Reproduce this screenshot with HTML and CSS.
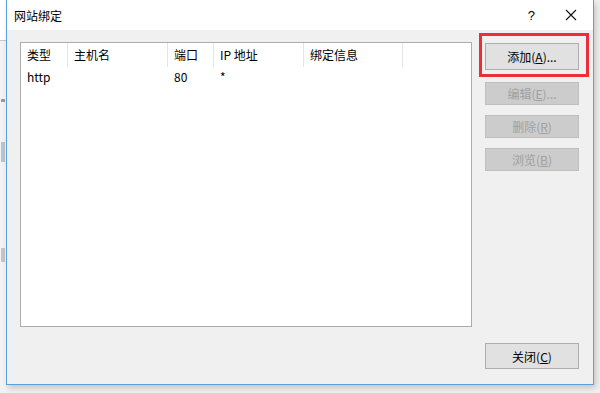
FILE: index.html
```html
<!DOCTYPE html>
<html lang="zh-CN">
<head>
    <meta charset="UTF-8">
    <title>网站绑定</title>
    <link rel="stylesheet" href="styles.css">
</head>
<body>

    <div class="desktop">
        <div class="behind">
            <div class="behind-top"></div>
            <div class="behind-mark m1"></div>
            <div class="behind-mark m2"></div>
            <div class="behind-mark m3"></div>
        </div>

        <div class="dialog">
            <div class="titlebar">
                <span class="title">网站绑定</span>
                <span class="help">?</span>
                <span class="close-x">
                    <svg width="12" height="12" viewBox="0 0 12 12">
                        <path d="M1 1 L11 11 M11 1 L1 11" stroke="#111" stroke-width="1.1" fill="none"/>
                    </svg>
                </span>
            </div>

            <div class="body">
                <div class="list">
                    <div class="row head">
                        <div class="col c1">类型</div>
                        <div class="col c2">主机名</div>
                        <div class="col c3">端口</div>
                        <div class="col c4">IP 地址</div>
                        <div class="col c5">绑定信息</div>
                    </div>
                    <div class="row item">
                        <div class="col c1">http</div>
                        <div class="col c2"></div>
                        <div class="col c3">80</div>
                        <div class="col c4">*</div>
                        <div class="col c5"></div>
                    </div>
                </div>

                <div class="actions">
                    <button class="btn main">添加(<u>A</u>)...</button>
                    <button class="btn off">编辑(<u>E</u>)...</button>
                    <button class="btn off">删除(<u>R</u>)</button>
                    <button class="btn off">浏览(<u>B</u>)</button>
                    <button class="btn bottom">关闭(<u>C</u>)</button>
                </div>
            </div>

            <!-- annotation box round the add button -->
            <div class="highlight"></div>
        </div>
    </div>

</body>
</html>
```

FILE: styles.css
```css
body {
    margin: 0;
    background: #f0f0f0;
    font-family: "Noto Sans CJK SC", "Liberation Sans", sans-serif;
    font-size: 12px;
    color: #000;
}
.desktop {
    display: flex;
    width: 600px;
    height: 393px;
    overflow: hidden;
}
.behind {
    width: 6px;
    flex-shrink: 0;
    display: flex;
    flex-direction: column;
    background: #f3f3f3;
}
.behind-top {
    height: 40px;
    background: #fff;
    border-bottom: 1px solid #c8c8c8;
}
.behind-mark {
    width: 4px;
    margin-left: 1px;
    background: #9a9a9a;
}
.m1 {
    height: 3px;
    margin-top: 58px;
}
.m2 {
    height: 20px;
    margin-top: 40px;
    background: #b8c4d0;
}
.m3 {
    height: 14px;
    margin-top: 86px;
    background: #c6c6c6;
}
.dialog {
    position: relative;
    width: 586px;
    height: 384px;
    border: 1px solid #5a9fe0;
    border-top: none;
    background: #f0f0f0;
    display: flex;
    flex-direction: column;
    box-shadow: 2px 3px 6px rgba(0, 0, 0, 0.18);
}
.titlebar {
    height: 30px;
    background: #fff;
    display: flex;
    align-items: center;
    padding-left: 7px;
}
.title {
    flex: 1;
}
.help {
    font-family: "Liberation Sans", sans-serif;
    font-size: 13px;
    margin-right: 30px;
}
.close-x {
    display: flex;
    margin-right: 16px;
}
.body {
    flex: 1;
    display: flex;
    gap: 13px;
    padding: 12px 14px 15px 13px;
}
.list {
    width: 450px;
    height: 283px;
    background: #fff;
    border: 1px solid #acacac;
}
.row {
    display: flex;
}
.head {
    height: 24px;
    align-items: center;
}
.head .col {
    border-right: 1px solid #e5e5e5;
    height: 24px;
    line-height: 23px;
}
.item {
    height: 19px;
    line-height: 19px;
}
.col {
    padding-left: 6px;
    box-sizing: border-box;
}
.c1 { width: 47px; }
.c2 { width: 100px; }
.c3 { width: 46px; }
.c4 { width: 90px; }
.c5 { width: 99px; }
.actions {
    width: 94px;
    display: flex;
    flex-direction: column;
}
.btn {
    font-family: inherit;
    font-size: 12px;
    height: 23px;
    padding: 0;
    background: #e1e1e1;
    border: 1px solid #adadad;
    color: #000;
    margin-bottom: 10px;
}
.btn u {
    text-decoration: underline;
}
.btn.main {
    height: 27px;
    margin-top: 1px;
    margin-bottom: 12px;
}
.btn.off {
    background: #cccccc;
    border-color: #bfbfbf;
    color: #a0a0a0;
}
.btn.bottom {
    height: 26px;
    margin-top: auto;
    margin-bottom: 0;
}
.highlight {
    position: absolute;
    left: 472px;
    top: 33px;
    width: 110px;
    height: 44px;
    box-sizing: border-box;
    border: 3px solid #ec2f37;
}
```
